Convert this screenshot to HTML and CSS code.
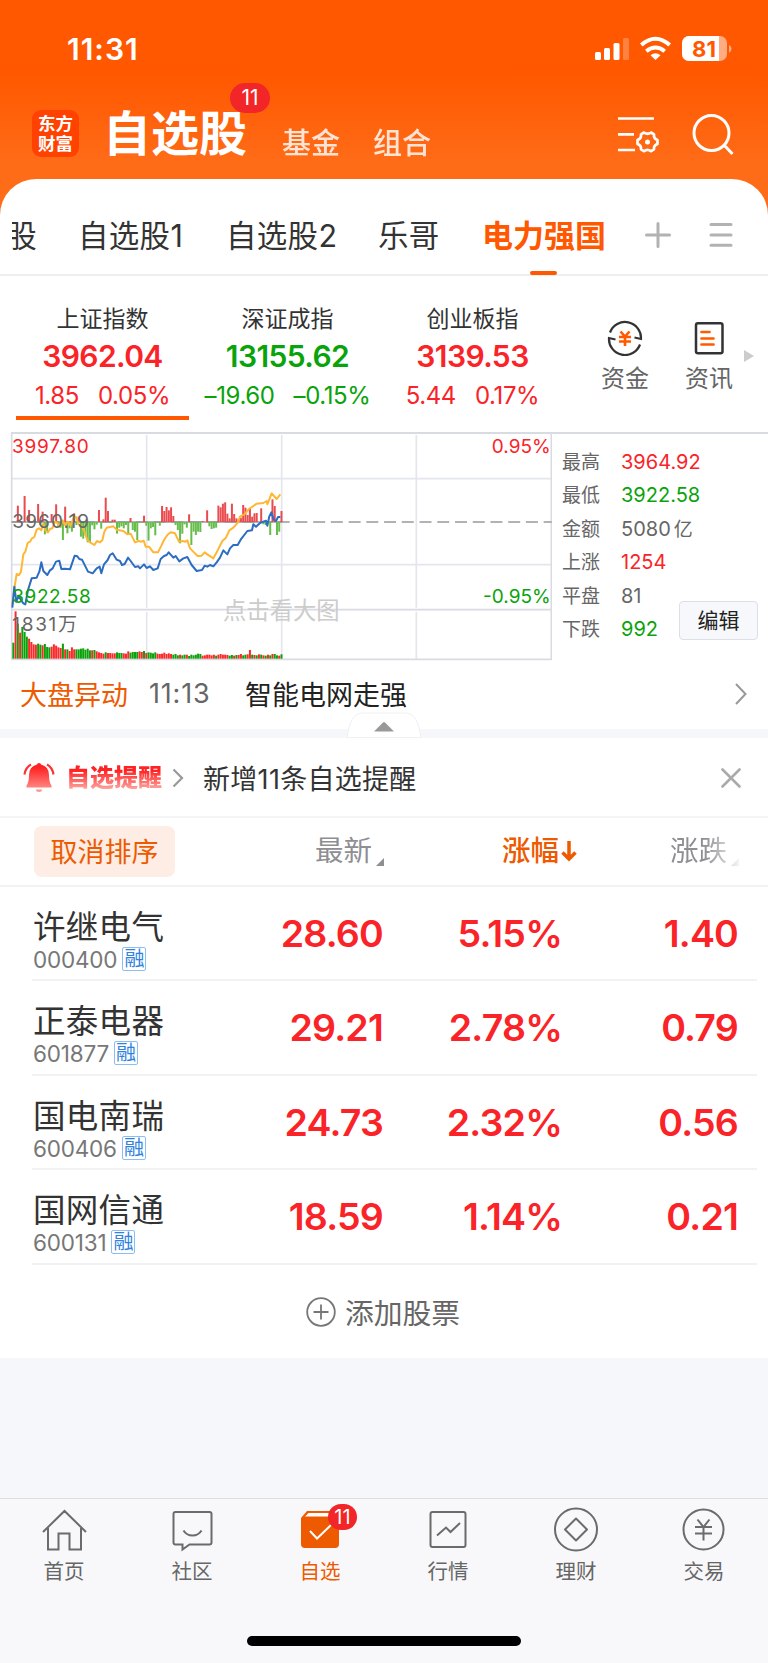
FILE: index.html
```html
<!DOCTYPE html>
<html lang="zh-CN">
<head>
  <meta charset="UTF-8">
  <meta name="viewport" content="width=device-width, initial-scale=1.0">
  <title>自选股</title>
  <link rel="stylesheet" href="styles.css">
</head>
<body>
  <header class="top">
    <div class="status">
      <span class="clock">11:31</span>
      <svg class="status-icons" width="138" height="26" viewBox="0 0 138 26">
        <g fill="#fff">
          <rect x="0" y="16" width="6" height="8" rx="1.5"/>
          <rect x="9" y="12" width="6" height="12" rx="1.5"/>
          <rect x="18.500" y="7" width="6" height="17" rx="1.5"/>
          <rect x="28" y="2" width="6" height="22" rx="1.5" opacity=".25"/>
          <path d="M60.500 24L55.500 19.200Q60.500 15.500 65.500 19.200Z"/>
        </g>
        <g fill="none" stroke="#fff" stroke-width="4">
          <path d="M46.300 9Q60.500-3.500 74.700 9"/>
          <path d="M51.300 15.200Q60.500 7.800 69.700 15.200"/>
        </g>
        <rect x="87" y="0" width="45" height="25" rx="7" fill="#fff" opacity=".5"/>
        <path d="M94 0H124V25H94A7 7 0 0 1 87 18V7A7 7 0 0 1 94 0Z" fill="#fff"/>
        <path d="M134 9Q136.500 10 136.500 12.800T134 17Z" fill="#fff" opacity=".5"/>
        <text x="109" y="20.500" class="battery-text" text-anchor="middle">81</text>
      </svg>
    </div>
    <div class="nav">
      <div class="logo">东方<br>财富</div>
      <div class="nav-title">自选股<span class="badge">11</span></div>
      <div class="nav-link">基金</div>
      <div class="nav-link">组合</div>
      <svg class="nav-setting" width="44" height="40" viewBox="0 0 44 40" fill="none" stroke="#fff" stroke-width="2.700">
        <path d="M2 4.500H38M2 20.300H18M2 36H19"/>
        <path stroke-linejoin="round" d="M28 18.500Q31.500 21 35 18.500L38 20.300Q37.500 24.500 41.500 26V30Q37.500 31.500 38 35.300L35 37.200Q31.500 34.500 28 37.200L25 35.300Q25.500 31.500 21.500 30V26Q25.500 24.500 25 20.300Z"/>
        <circle cx="31.500" cy="28" r="2.500" fill="#fff" stroke="none"/>
      </svg>
      <svg class="nav-search" width="44" height="44" viewBox="0 0 44 44" fill="none" stroke="#fff" stroke-width="3">
        <circle cx="20.500" cy="20" r="17.500"/>
        <path d="M33 32L41.500 41"/>
      </svg>
    </div>
  </header>

  <main class="panel">
    <div class="tabs">
      <div class="tab tab-cut"><span>股</span></div>
      <div class="tab tab-1">自选股1</div>
      <div class="tab tab-2">自选股2</div>
      <div class="tab tab-3">乐哥</div>
      <div class="tab tab-4 active">电力强国</div>
      <svg class="tab-add" width="26" height="26" viewBox="0 0 26 26" stroke="#b2b2b2" stroke-width="3" stroke-linecap="round"><path d="M1.500 13H24.500M13 1.500V24.500"/></svg>
      <svg width="24" height="26" viewBox="0 0 24 26" stroke="#b2b2b2" stroke-width="3" stroke-linecap="round"><path d="M2 2.500H22M2 13H22M2 23.300H22"/></svg>
    </div>

    <div class="indices">
      <div class="index up current">
        <div class="index-name">上证指数</div>
        <div class="index-value">3962.04</div>
        <div class="index-diff"><span>1.85</span><span>0.05%</span></div>
      </div>
      <div class="index down">
        <div class="index-name">深证成指</div>
        <div class="index-value">13155.62</div>
        <div class="index-diff"><span>–19.60</span><span>–0.15%</span></div>
      </div>
      <div class="index up">
        <div class="index-name">创业板指</div>
        <div class="index-value">3139.53</div>
        <div class="index-diff"><span>5.44</span><span>0.17%</span></div>
      </div>
      <div class="quick quick-fund">
        <svg width="36" height="36" viewBox="0 0 36 36" fill="none" stroke="#333" stroke-width="2.200">
          <path d="M3 12.500A16 16 0 0 1 34 19L27.500 17.500"/>
          <path d="M33 24.500A16 16 0 0 1 2 18L8.500 19.500"/>
          <path stroke="#ff5a00" stroke-width="2.600" d="M13.500 11.500L18 16.500L22.500 11.500M12 17H24M12 21.500H24M18 16.500V26"/>
        </svg>
        <span>资金</span>
      </div>
      <div class="quick quick-news">
        <svg width="36" height="36" viewBox="0 0 36 36" fill="none" stroke="#333" stroke-width="2.500">
          <rect x="5" y="3.200" width="26.500" height="30" rx="2"/>
          <path stroke="#ff5a00" stroke-width="2.700" stroke-linecap="round" d="M10.500 12H18.500M10.500 18.500H22.500M10.500 24.500H22.500"/>
        </svg>
        <span>资讯</span>
      </div>
      <svg class="more" width="10" height="12" viewBox="0 0 10 12"><path d="M0 0L10 6L0 12Z" fill="#ccc"/></svg>
    </div>

    <div class="market">
      <svg class="chart" width="552" height="229" viewBox="0 21 1656 687">
        <g stroke="#e3e6ee" stroke-width="5">
          <path d="M35 161H1655M35 419H1655M440 30V548M845 30V548M1249 30V548M440 560V703M845 560V703M1249 560V703"/>
          <path stroke="#d9dbe3" d="M35 24V703M1654 24V703M35 554H1655M33 703H1656"/>
        </g>
        <path d="M35 291H1655" stroke="#999" stroke-width="5" stroke-dasharray="36 17.200"/>
        <path d="M35 291H845" stroke="#999" stroke-width="4"/>
        <g id="flow"></g>
        <g id="volume"></g>
        <g fill="none" stroke-width="6" stroke-linejoin="round">
          <polyline stroke="#ffb733" points="37,540 43,490 50,447 57,450 63,440 70,388 76,380 83,354 90,350 96,340 103,336 110,314 117,310 124,316 130,296 137,318 144,322 150,312 157,310 165,290 172,294 180,305 188,286 195,300 203,290 212,302 220,280 228,276 236,298 244,302 252,316 262,345 270,352 283,360 291,348 300,352 307,346 313,320 320,308 340,304 350,314 370,318 382,328 392,326 405,352 415,348 424,350 431,347 437,365 447,365 460,382 474,382 484,362 492,345 502,330 512,322 525,325 537,350 547,348 556,350 562,346 570,370 582,382 593,393 605,392 614,382 622,388 640,400 650,382 667,348 678,338 688,316 700,308 714,292 720,275 733,268 747,252 770,236 790,234 800,228 802,238 815,205 830,222 841,208"/>
          <polyline stroke="#2c6dc2" points="37,548 43,485 49,530 56,512 63,525 70,535 76,538 84,495 95,460 110,458 118,440 124,412 130,438 142,450 150,436 158,430 168,410 178,407 184,432 194,431 210,433 224,392 232,394 238,402 246,404 255,422 264,440 278,445 290,430 299,425 304,445 312,418 323,405 330,390 338,385 350,404 360,408 366,420 374,417 384,398 392,408 405,426 415,424 420,430 432,418 440,429 450,424 460,435 473,430 482,402 492,393 500,390 506,382 520,398 527,393 538,409 550,400 562,396 575,420 590,438 606,435 614,422 622,425 630,420 640,424 650,412 660,398 670,376 682,388 690,370 700,360 713,360 722,344 742,318 756,316 760,298 768,305 780,294 798,287 802,302 808,274 814,262 821,284 828,288 834,276 841,276"/>
        </g>
        <g class="chart-text">
          <text class="c-up" x="36" y="85" textLength="230">3997.80</text>
          <text class="c-mute" x="37" y="308" textLength="230">3960.19</text>
          <text class="c-down" x="37" y="533" textLength="235">3922.58</text>
          <text class="c-mute" x="37" y="617" textLength="194">1831万</text>
          <text class="c-up" x="1652" y="85" text-anchor="end">0.95%</text>
          <text class="c-down" x="1652" y="533" text-anchor="end">-0.95%</text>
          <text class="c-hint" x="669" y="581" textLength="350">点击看大图</text>
        </g>
      </svg>
      <div class="stats">
        <div class="stat"><span>最高</span><b class="c-up">3964.92</b></div>
        <div class="stat"><span>最低</span><b class="c-down">3922.58</b></div>
        <div class="stat"><span>金额</span><b>5080<i>亿</i></b></div>
        <div class="stat"><span>上涨</span><b class="c-up">1254</b></div>
        <div class="stat"><span>平盘</span><b>81</b></div>
        <div class="stat"><span>下跌</span><b class="c-down">992</b></div>
        <div class="edit">编辑</div>
      </div>
    </div>

    <div class="news">
      <span class="news-tag">大盘异动</span>
      <span class="news-time">11:13</span>
      <span class="news-title">智能电网走强</span>
      <svg width="14" height="24" viewBox="0 0 14 24" fill="none" stroke="#999" stroke-width="2"><path d="M2 2L11.500 12L2 22"/></svg>
    </div>
    <div class="band">
      <svg class="fold" width="76" height="28" viewBox="0 0 76 28">
        <path d="M1 26.500Q4 3 15 2H61Q72 3 75 26.500Z" fill="#fff" stroke="#eff0f3"/>
        <path d="M28 20.500L37 11.500Q38 10.500 39 11.500L48 20.500Z" fill="#999"/>
      </svg>
    </div>

    <div class="alert">
      <svg class="bell" width="32" height="32" viewBox="0 0 32 32">
        <defs>
          <linearGradient id="bell" x1="0" y1="0" x2="0" y2="1">
            <stop offset=".15" stop-color="#f22"/>
            <stop offset="1" stop-color="#ff9a94"/>
          </linearGradient>
        </defs>
        <path fill="url(#bell)" d="M14 2.500Q14 1 16 1T18 2.500Q26 4.500 26 13Q26 20.500 28.500 23.500V25.500H3.500V23.500Q6 20.500 6 13Q6 4.500 14 2.500ZM13 27.500H19Q19 30 16 30T13 27.500Z"/>
        <path fill="none" stroke="#f33" stroke-width="2.200" d="M8 2.500Q2.500 5.500 1.500 12.500M24 2.500Q29.500 5.500 30.500 12.500"/>
      </svg>
      <span class="alert-tag">自选提醒</span>
      <svg class="alert-arrow" width="12" height="20" viewBox="0 0 12 20" fill="none" stroke="#999" stroke-width="2.200"><path d="M1.500 1.500L10 10L1.500 18.500"/></svg>
      <span class="alert-text">新增11条自选提醒</span>
      <svg width="20" height="20" viewBox="0 0 20 20" stroke="#aaa" stroke-width="2.600" stroke-linecap="round"><path d="M1.500 1.500L18.500 18.500M18.500 1.500L1.500 18.500"/></svg>
    </div>

    <div class="list-head">
      <div class="sort-cancel">取消排序</div>
      <div class="head-price">最新<svg width="8" height="8" viewBox="0 0 8 8"><path d="M8 0V8H0Z" fill="#8e8e93"/></svg></div>
      <div class="head-pct">涨幅<svg width="16" height="22" viewBox="0 0 16 22" fill="none" stroke="#ee5a00" stroke-width="3.500"><path d="M8 1V19M1.500 12.500L8 19L14.500 12.500"/></svg></div>
      <div class="head-diff">涨跌<svg width="8" height="8" viewBox="0 0 8 8"><path d="M8 0V8H0Z" fill="#8e8e93"/></svg></div>
    </div>

    <div class="stock">
      <div class="stock-info"><div class="stock-name">许继电气</div><div class="stock-code">000400<em>融</em></div></div>
      <div class="price">28.60</div><div class="pct">5.15%</div><div class="diff">1.40</div>
    </div>
    <div class="stock">
      <div class="stock-info"><div class="stock-name">正泰电器</div><div class="stock-code">601877<em>融</em></div></div>
      <div class="price">29.21</div><div class="pct">2.78%</div><div class="diff">0.79</div>
    </div>
    <div class="stock">
      <div class="stock-info"><div class="stock-name">国电南瑞</div><div class="stock-code">600406<em>融</em></div></div>
      <div class="price">24.73</div><div class="pct">2.32%</div><div class="diff">0.56</div>
    </div>
    <div class="stock">
      <div class="stock-info"><div class="stock-name">国网信通</div><div class="stock-code">600131<em>融</em></div></div>
      <div class="price">18.59</div><div class="pct">1.14%</div><div class="diff">0.21</div>
    </div>

    <div class="add">
      <svg width="30" height="30" viewBox="0 0 30 30" fill="none" stroke="#777" stroke-width="1.800"><circle cx="15" cy="15" r="13.800"/><path d="M7.500 15H22.500M15 7.500V22.500"/></svg>
      添加股票
    </div>
  </main>

  <footer class="tabbar">
    <div class="tabbar-items">
      <div class="item">
        <svg width="48" height="48" viewBox="0 0 48 48"><path d="M3 26L24.500 5L46 26M8 22V43.500H18.500V27.500H29.500V43.500H41V22"/></svg>
        <span>首页</span>
      </div>
      <div class="item">
        <svg width="48" height="48" viewBox="1.500 0 48 48"><path d="M9 6H43Q45 6 45 8V36.500Q45 38.500 43 38.500H23L16 43.500V38.500H9Q7 38.500 7 36.500V8Q7 6 9 6M17 24.500Q20 29.500 26 29.500T35 24.500"/></svg>
        <span>社区</span>
      </div>
      <div class="item on">
        <svg width="48" height="48" viewBox="0 0 48 48">
          <path class="solid" d="M11 5H43V38Q43 42 39 42H9Q5 42 5 38V12Z"/>
          <path class="solid white" d="M12.500 7H42V10.500H9Z"/>
          <path class="tick" d="M14 25L21 32.500L35 19"/>
        </svg>
        <span>自选</span>
        <span class="badge badge-small">11</span>
      </div>
      <div class="item">
        <svg width="48" height="48" viewBox="0 0 48 48"><rect x="6.500" y="6" width="35" height="35" rx="2"/><path d="M13 29.500L22 21.500L26.500 26L36 17"/></svg>
        <span>行情</span>
      </div>
      <div class="item">
        <svg width="48" height="48" viewBox="0 0 48 48"><circle cx="24" cy="23.500" r="21"/><path stroke-linejoin="round" d="M24 12.500L35 23.500L24 34.500L13 23.500Z"/></svg>
        <span>理财</span>
      </div>
      <div class="item">
        <svg width="48" height="48" viewBox="0 0 48 48"><circle cx="23.500" cy="23.500" r="20"/><path d="M17.500 13.500L23.500 21L29.500 13.500M15 21H32M15 27.500H32M23.500 21V34.500"/></svg>
        <span>交易</span>
      </div>
    </div>
    <div class="home-bar"></div>
  </footer>

  <script>
    const STEP = 6.76;
    const START = 40;

    // signed bar heights around the previous close line
    const flow = [0,0,49,0,0,78,0,36,0,0,-3,54,-9,31,-37,-27,0,24,-4,53,-14,-17,-54,46,-34,-19,-29,26,-9,16,-44,-50,-40,-61,-60,-10,-22,-8,36,-20,8,73,33,-2,7,7,-35,-17,-13,-19,-9,-39,12,-24,-29,-54,-2,0,19,-11,-56,-19,-15,-40,-1,-11,48,33,45,35,44,18,-9,-24,-64,-35,-7,-17,23,-69,-29,-39,-29,-30,3,0,35,-13,-21,-19,-17,49,44,55,59,25,11,55,24,11,7,13,51,43,21,39,16,26,27,0,41,-7,-9,2,-39,68,48,-39,-29,33];

    const volume = 'g48 r142 g105 r78 g95 g80 g66 r60 r50 r43 r42 g45 g42 r40 g44 g35 g34 r36 r43 r39 r34 r32 g45 r28 g28 r23 r34 r28 g28 g28 g30 g31 g27 g30 g25 r25 g26 r22 r19 r17 r15 g19 r17 r17 r16 r16 g19 g17 g17 r16 r15 r22 g18 g20 g20 g20 r22 r20 g23 r17 g19 g18 g16 g19 r15 r14 r15 r18 r14 r16 r14 g12 g14 g10 r12 g10 g12 r12 g8 g12 g10 g12 g15 g14 r9 r10 r12 r12 r10 r12 g9 r12 r14 r12 r12 r11 g9 g11 r9 g11 r11 r14 g10 g12 r13 r26 g12 r11 g10 r13 g12 r10 g9 r12 g10 r14 g14 g10 r9 g13'.split(' ');

    function bars(id, list, base, up, down) {
      document.getElementById(id).innerHTML = list.map((v, i) => {
        const h = Math.abs(v);
        const y = v > 0 || id === 'volume' ? base - h : base;
        return `<rect x="${START + i * STEP - 3}" y="${y}" width="6" height="${h}" fill="${v > 0 ? up : down}"/>`;
      }).join('');
    }

    bars('flow', flow, 291, '#ea4b4f', '#66bd4b');
    bars('volume', volume.map(s => (s[0] === 'r' ? 1 : -1) * s.slice(1)), 701, '#fa2a2a', '#0aa10a');
  </script>
</body>
</html>
```
FILE: styles.css
```css
* { box-sizing: border-box; }
body {
  margin: 0;
  width: 768px;
  height: 1663px;
  overflow: hidden;
  display: flex;
  flex-direction: column;
  background: #f5f7fa;
  font-family: Inter, "Noto Sans CJK SC", sans-serif;
  color: #333;
  white-space: nowrap;
}
svg { display: block; flex: none; }

.c-up, .up { color: #fa2328; fill: #fa2328; }
.c-down, .down { color: #09a30b; fill: #09a30b; }
.c-mute { fill: #666; }
.c-hint { fill: #ccc; }

/* header */
.top {
  height: 215px;
  flex: none;
  background: linear-gradient(#ff5800 0, #ff5800 75px, #ff6c18 165px);
  color: #fff;
}
.status {
  height: 98px;
  padding: 36px 35px 0 67px;
  display: flex;
  justify-content: space-between;
}
.clock { font-size: 30px; font-weight: 600; line-height: 27px; letter-spacing: 1px; }
.battery-text { font-size: 22px; font-weight: 700; fill: #ff5800; }
.nav { display: flex; height: 60px; padding-left: 32px; margin-top: 5px; }
.logo {
  width: 47px;
  height: 47px;
  margin-top: 7px;
  border-radius: 9px;
  background: #ff4200;
  font-size: 17.500px;
  font-weight: 700;
  line-height: 19.500px;
  text-align: center;
  padding-top: 4px;
}
.nav-title {
  position: relative;
  width: 179px;
  margin-left: 24px;
  font-size: 48px;
  font-weight: 700;
  line-height: 62px;
}
.badge {
  position: absolute;
  left: 127px;
  top: -20px;
  width: 40px;
  height: 30px;
  border-radius: 15px;
  background: #f22529;
  color: #fff;
  font-size: 21px;
  font-weight: 400;
  line-height: 30px;
  text-align: center;
}
.nav-link { width: 91px; font-size: 29px; line-height: 82px; opacity: .82; font-weight: 500; }
.nav-setting { margin: 11px 0 0 152px; }
.nav-search { margin: 10px 0 0 31px; }

/* white panel */
.panel {
  position: relative;
  height: 1179px;
  flex: none;
  margin-top: -36px;
  border-radius: 36px 36px 0 0;
  background: #fff;
}
.tabs {
  height: 97px;
  display: flex;
  align-items: center;
  padding: 17px 0 0 12px;
  border-bottom: 2px solid #eee;
  font-size: 30.500px;
  letter-spacing: 0.3px;
}
.tab { height: 78px; line-height: 80px; }
.tab-cut { width: 66px; }
.tab-cut span { display: block; width: 25px; overflow: hidden; direction: rtl; }
.tab-1 { width: 148px; }
.tab-2 { width: 152px; }
.tab-3 { width: 104px; }
.tab-4 { width: 163px; }
.active { position: relative; color: #ff5800; font-weight: 700; font-size: 31px; letter-spacing: 0; }
.active::after {
  content: "";
  position: absolute;
  left: 48px;
  bottom: -1px;
  width: 27px;
  height: 4px;
  border-radius: 2px;
  background: #ff5800;
}
.tab-add { margin-right: 38px; }

/* index cards */
.indices { height: 156px; display: flex; padding-left: 10px; }
.index { width: 185px; height: 144px; text-align: center; padding-top: 25px; }
.index-name { font-size: 23px; line-height: 36px; color: #333; }
.index-value { font-size: 30px; font-weight: 600; line-height: 39px; letter-spacing: -0.6px; }
.index-diff { display: flex; justify-content: center; gap: 19px; font-size: 24px; line-height: 39px; letter-spacing: -0.4px; }
.current { background: linear-gradient(#ff5800, #ff5800) 6px 100% / 173px 4px no-repeat; }
.quick { width: 84px; padding-top: 44px; display: flex; flex-direction: column; align-items: center; color: #666; font-size: 24px; line-height: 46px; }
.quick-fund { margin-left: 18px; }
.more { margin: 74px 0 0 -7px; }

/* minute chart */
.market { display: flex; height: 229px; background: linear-gradient(#d9dbe3, #d9dbe3) 11px 0 / 757px 2px no-repeat; }
.chart-text { font-size: 57px; }
.chart-text .c-hint { font-size: 70px; }
.stats { position: relative; padding: 14px 0 0 10px; font-size: 19px; color: #666; }
.stat { display: flex; height: 33.400px; line-height: 33.400px; }
.stat span { width: 59px; }
.stat b { font-weight: 400; font-size: 20px; }
.stat i { font-style: normal; font-size: 19px; margin-left: 3px; }
.edit {
  position: absolute;
  left: 127px;
  top: 169px;
  width: 79px;
  height: 39px;
  border: 1px solid #dcdfe6;
  border-radius: 4px;
  background: #f7f8fb;
  color: #222;
  font-size: 21px;
  line-height: 37px;
  text-align: center;
}

.news { height: 68px; display: flex; align-items: center; padding: 0 20px 3px; font-size: 27px; }
.news-tag { width: 129px; color: #ee5a00; }
.news-time { width: 96px; color: #666; letter-spacing: 0.8px; }
.news-title { flex: 1; color: #222; }
.band { position: relative; height: 9px; background: #f5f7fa; }
.fold { position: absolute; left: 346px; top: -18px; }

.alert { height: 80px; display: flex; align-items: center; padding: 1px 27px 0 23px; border-bottom: 2px solid #f4f4f6; }
.alert-tag {
  width: 106px;
  margin-left: 11px;
  font-size: 24px;
  font-weight: 900;
  line-height: 30px;
  background: linear-gradient(#f22 25%, #ffaaa5 90%);
  -webkit-background-clip: text;
  background-clip: text;
  color: transparent;
}
.alert-text { flex: 1; margin-left: 19px; font-size: 27px; letter-spacing: 0.3px; }

/* stock list */
.list-head { height: 69px; display: flex; align-items: center; padding-left: 34px; border-bottom: 2px solid #f2f2f4; font-size: 28.500px; line-height: 40px; color: #8e8e93; }
.sort-cancel {
  width: 141px;
  height: 51px;
  border-radius: 8px;
  background: #fdede4;
  color: #ee5a00;
  font-size: 27px;
  line-height: 53px;
  text-align: center;
}
.head-price, .head-pct, .head-diff { display: flex; align-items: center; padding-bottom: 1px; }
.head-price { width: 187px; margin-left: 140px; }
.head-price svg, .head-diff svg { margin: 21px 0 0 4px; }
.head-pct { width: 168px; color: #ee5a00; font-weight: 500; }
.head-pct svg { margin-left: 2px; }
.head-diff { -webkit-mask-image: linear-gradient(90deg, #000 50%, transparent 105%); mask-image: linear-gradient(90deg, #000 50%, transparent 105%); }
.stock {
  height: 94.500px;
  margin: 0 11px 0 32px;
  padding-left: 1px;
  display: flex;
  border-bottom: 2px solid #f2f2f4;
  font-size: 37.500px;
  font-weight: 600;
  line-height: 93px;
  letter-spacing: -0.8px;
  color: #fa2328;
  text-align: right;
}
.list-head + .stock { height: 94px; }
.stock-info { width: 200px; text-align: left; font-weight: 400; letter-spacing: 0; }
.stock-name { height: 40px; margin-top: 21px; font-size: 32.500px; line-height: 40px; color: #333; letter-spacing: 0.3px; }
.stock-code { display: flex; align-items: center; height: 24px; font-size: 22.500px; line-height: 24px; color: #777; letter-spacing: -0.2px; }
.stock-code em {
  width: 24px;
  height: 24px;
  margin: -2px 0 0 5px;
  border: 1px solid #8dbdf2;
  border-radius: 2px;
  color: #2f83de;
  font-style: normal;
  font-size: 20px;
  line-height: 22px;
  text-align: center;
}
.price { width: 150px; }
.pct { width: 179px; }
.diff { width: 176px; }
.add { height: 94px; display: flex; align-items: center; justify-content: center; gap: 9px; padding-right: 2px; font-size: 28.800px; color: #666; }

/* bottom bar */
.tabbar { margin-top: auto; height: 165px; flex: none; border-top: 1px solid #dedee2; background: #f8f8fb; }
.tabbar-items { display: flex; padding-top: 7px; }
.item { position: relative; width: 128px; display: flex; flex-direction: column; align-items: center; color: #666; font-size: 20.500px; line-height: 35px; }
.item svg { fill: none; stroke: #6b6b6b; stroke-width: 2; }
.item .solid { fill: #ee5a00; stroke: none; }
.item .white { fill: #fff; }
.item .tick { stroke: #fff; }
.on { color: #ee5a00; }
.badge-small { left: 72px; top: -2px; width: 29px; height: 26px; font-size: 20px; line-height: 26px; }
.home-bar { width: 274px; height: 10px; margin: 47px auto 0; border-radius: 5px; background: #000; }
```
